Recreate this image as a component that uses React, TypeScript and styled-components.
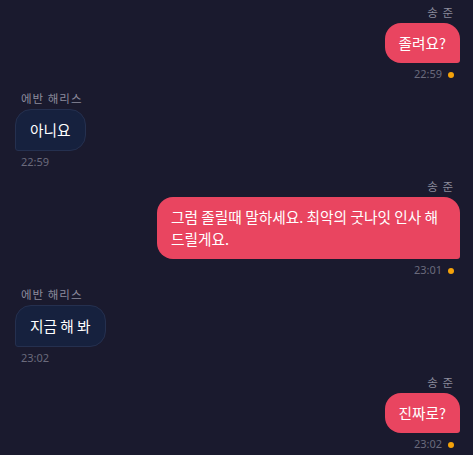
import React from "react";
import styled, { createGlobalStyle } from "styled-components";

const GlobalStyle = createGlobalStyle`
  * {
    box-sizing: border-box;
  }
  html, body {
    margin: 0;
    padding: 0;
    background: #1a1a2e;
  }
  body {
    font-family: "Noto Sans", "Noto Sans CJK KR", sans-serif;
  }
`;

const Container = styled.main`
  width: 473px;
  min-height: 455px;
  background: #1a1a2e;
  display: flex;
  flex-direction: column;
  gap: 8px;
  padding: 4px 13px 0 15px;
`;

const Group = styled.div<{ $mine: boolean }>`
  display: flex;
  flex-direction: column;
  align-items: ${({ $mine }) => ($mine ? "flex-end" : "flex-start")};
`;

const Name = styled.div<{ $mine: boolean }>`
  font-family: "Noto Sans CJK KR", sans-serif;
  font-size: 11.5px;
  line-height: 16px;
  letter-spacing: 1px;
  color: #8b8b9c;
  margin-bottom: 3px;
  padding: ${({ $mine }) => ($mine ? "0 6px 0 0" : "0 0 0 6px")};
`;

const Bubble = styled.div<{ $mine: boolean }>`
  max-width: 303px;
  font-family: "Noto Sans CJK KR", sans-serif;
  font-size: 14.7px;
  line-height: 22px;
  padding: 9px 14px;
  word-break: keep-all;
  color: #ffffff;
  background: ${({ $mine }) => ($mine ? "#e94560" : "#16213e")};
  border: ${({ $mine }) => ($mine ? "none" : "1px solid #25304f")};
  border-radius: ${({ $mine }) =>
    $mine ? "16px 16px 3px 16px" : "16px 16px 16px 3px"};
`;

const Meta = styled.div<{ $mine: boolean }>`
  display: flex;
  align-items: center;
  gap: 6px;
  margin-top: 3px;
  font-size: 11px;
  line-height: 16px;
  color: #6a6a7c;
  padding: ${({ $mine }) => ($mine ? "0 6px 0 0" : "0 0 0 6px")};
`;

const Dot = styled.span`
  width: 6px;
  height: 6px;
  border-radius: 50%;
  background: #f5a20a;
  margin-top: 2px;
`;

interface IMessage {
  id: number;
  mine: boolean;
  name: string;
  text: string;
  time: string;
}

const messages: IMessage[] = [
  { id: 1, mine: true, name: "송 준", text: "졸려요?", time: "22:59" },
  { id: 2, mine: false, name: "에반 해리스", text: "아니요", time: "22:59" },
  {
    id: 3,
    mine: true,
    name: "송 준",
    text: "그럼 졸릴때 말하세요. 최악의 굿나잇 인사 해 드릴게요.",
    time: "23:01",
  },
  { id: 4, mine: false, name: "에반 해리스", text: "지금 해 봐", time: "23:02" },
  { id: 5, mine: true, name: "송 준", text: "진짜로?", time: "23:02" },
];

const App = () => {
  return (
    <>
      <GlobalStyle />
      <Container>
        {messages.map((msg) => (
          <Group key={msg.id} $mine={msg.mine}>
            <Name $mine={msg.mine}>{msg.name}</Name>
            <Bubble $mine={msg.mine}>{msg.text}</Bubble>
            <Meta $mine={msg.mine}>
              {msg.time}
              {msg.mine && <Dot />}
            </Meta>
          </Group>
        ))}
      </Container>
    </>
  );
};

export default App;
